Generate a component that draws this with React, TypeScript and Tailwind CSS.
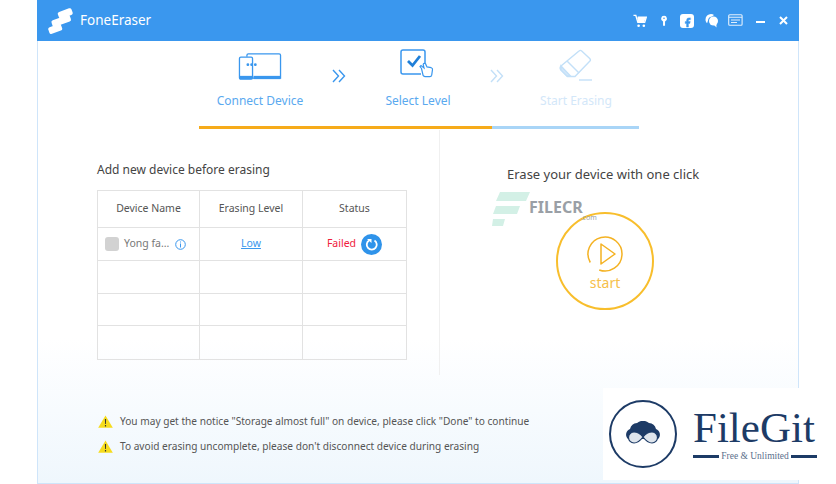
import { Facebook } from "lucide-react";

const font = "font-['Noto_Sans','Liberation_Sans',sans-serif]";

function LogoMark() {
  return (
    <svg width="26" height="26" viewBox="0 0 26 26" fill="#fff">
      <rect x="10" y="2" width="14.500" height="7" rx="2" transform="rotate(-20 17 5.500)" />
      <rect x="3.500" y="9.500" width="19.500" height="7" rx="2" transform="rotate(-20 13 13)" />
      <rect x="0.500" y="17.500" width="13.500" height="7" rx="2" transform="rotate(-20 7 21)" />
    </svg>
  );
}

function HeaderIcons() {
  return (
    <div className="flex items-center text-white">
      <svg width="14" height="14" viewBox="0 0 15 15" fill="#fff">
        <path d="M0.500 1.500h2.500l2.200 7.500h7.300l1.700-5.500H5" fill="none" stroke="#fff" strokeWidth="1.500" />
        <path d="M4.500 4h9l-1.600 4.800H5.600z" />
        <circle cx="6" cy="12.600" r="1.400" />
        <circle cx="11.600" cy="12.600" r="1.400" />
      </svg>
      <svg width="8" height="14" viewBox="0 0 10 15" fill="#fff" className="ml-[13px]">
        <path d="M5 1a3.600 3.600 0 0 1 1.300 7v5.500H3.800V8A3.600 3.600 0 0 1 5 1z" />
        <circle cx="5" cy="4" r="1" fill="#3a97ee" />
      </svg>
      <div className="ml-[12px] flex h-[14px] w-[14px] items-end justify-center rounded-[3px] bg-white">
        <Facebook size={11} fill="#3a97ee" stroke="#3a97ee" strokeWidth={1} />
      </div>
      <svg width="15" height="15" viewBox="0 0 15 15" fill="#fff" className="ml-[10px]">
        <path d="M7 1a5.500 5.500 0 0 0-5.500 5.500c0 1.600.6 2.800 1.600 3.800L4 7.500C4 5.500 5.500 3.500 8 3.400L10 2A6 6 0 0 0 7 1z" />
        <circle cx="9.500" cy="8" r="4.500" />
        <path d="M10 12l2.500 2.500-.2-4z" />
      </svg>
      <svg width="15" height="13" viewBox="0 0 15 13" fill="none" stroke="#fff" strokeWidth="1.100" opacity="0.85" className="ml-[9px]">
        <rect x="0.700" y="0.700" width="13.400" height="10.600" rx="1" />
        <path d="M0.700 3.300h13.400M3 6h9M3 8.500h6" />
      </svg>
      <div className="ml-[13px] mt-[3px] h-[2px] w-[9px] bg-white" />
      <svg width="9" height="9" viewBox="0 0 9 9" stroke="#fff" strokeWidth="2" className="ml-[14px]">
        <path d="M1 1l7 7M8 1l-7 7" />
      </svg>
    </div>
  );
}

function ConnectIcon() {
  return (
    <svg width="44" height="28" viewBox="0 0 46 30" fill="none" stroke="#3a97ee" strokeWidth="1.400" className="mb-[2px]">
      <path d="M9 4V2.500A1.500 1.500 0 0 1 10.500 1h33A1.500 1.500 0 0 1 45 2.500V27H15" />
      <rect x="1" y="4.500" width="14" height="23.500" rx="1.500" fill="#fff" />
      <rect x="1" y="24.500" width="13.500" height="3.500" fill="#3a97ee" stroke="none" />
      <rect x="16" y="24.500" width="29" height="3.500" fill="#3a97ee" stroke="none" />
      <circle cx="10" cy="12.500" r="0.800" fill="#3a97ee" />
      <circle cx="14" cy="12.500" r="0.800" fill="#3a97ee" />
      <circle cx="18" cy="12.500" r="0.800" fill="#3a97ee" />
    </svg>
  );
}

function LevelIcon() {
  return (
    <svg width="36" height="34" viewBox="0 0 36 34" fill="none" stroke="#3a97ee" strokeWidth="1.500">
      <path d="M21 25H3a2 2 0 0 1-2-2V3a2 2 0 0 1 2-2h20a2 2 0 0 1 2 2v12" />
      <path d="M8 12l4.500 4.500L20 7" strokeWidth="2.800" stroke="#1f7fd8" />
      <path
        d="M21.500 19.500l-1.500-2 1-1 3 2.500-.8-3.500a1.300 1.300 0 0 1 2.400-.6l1.400 3 4.200.8c1 .3 1.500 1 1.300 2l-.8 5.500c-.2 1-.8 1.500-1.800 1.500h-4.500c-1 0-1.700-.5-2.300-1.300z"
        fill="#fff"
        strokeWidth="1.200"
      />
    </svg>
  );
}

function EraseIcon() {
  return (
    <svg width="34" height="34" viewBox="0 0 34 34" fill="none" stroke="#c3e0f8" strokeWidth="1.400">
      <path d="M20 2a2 2 0 0 1 2.700 0l8 7.500a2 2 0 0 1 0 2.800L16 27.500H8.500L2 21a3 3 0 0 1 0-4z" />
      <path d="M8 12l12 12" />
      <path d="M2 17l9.500 10H8L2 21z" fill="#d3e8fa" />
      <path d="M20 31h13" />
    </svg>
  );
}

function Chevrons({ faded }: { faded?: boolean }) {
  const color = faded ? "#c3e0f8" : "#3a97ee";
  return (
    <svg width="14" height="14" viewBox="0 0 14 14" fill="none" stroke={color} strokeWidth="1.400">
      <path d="M1 1l5.500 6L1 13M7 1l5.500 6L7 13" />
    </svg>
  );
}

function WarnIcon() {
  return (
    <svg width="15" height="13" viewBox="0 0 15 13" className="shrink-0">
      <path d="M7.500 0.500L14.800 12.800H0.200z" fill="#f6dc1d" />
      <path d="M6.900 4h1.200l-.2 5H7.100zM6.900 10h1.200v1.400H6.900z" fill="#333" />
    </svg>
  );
}

const rows = [0, 1, 2];

function DeviceTable() {
  return (
    <div className="w-[310px] border border-[#e2e2e2] text-[10.500px] text-[#555]">
      <div className="grid h-[37px] grid-cols-[102px_103px_1fr] items-center border-b border-[#e2e2e2] text-center">
        <div className="flex h-full items-center justify-center border-r border-[#e2e2e2]">Device Name</div>
        <div className="flex h-full items-center justify-center border-r border-[#e2e2e2]">Erasing Level</div>
        <div>Status</div>
      </div>
      <div className="grid h-[33px] grid-cols-[102px_103px_1fr] items-center border-b border-[#e2e2e2]">
        <div className="flex h-full items-center border-r border-[#e2e2e2] pl-[7px]">
          <div className="h-[14px] w-[14px] rounded-[3px] bg-[#d2d2d2]" />
          <span className="ml-[5px] text-[#777]">Yong fa...</span>
          <svg width="11" height="11" viewBox="0 0 11 11" fill="none" stroke="#3a97ee" className="ml-[6px]">
            <circle cx="5.500" cy="5.500" r="4.800" />
            <path d="M5.500 4.500v4M5.500 2.500v1" />
          </svg>
        </div>
        <div className="flex h-full items-center justify-center border-r border-[#e2e2e2] text-[#3a97ee] underline">
          Low
        </div>
        <div className="flex items-center justify-center gap-[5px]">
          <span className="text-[#f0203c]">Failed</span>
          <svg width="21" height="21" viewBox="0 0 21 21">
            <circle cx="10.500" cy="10.500" r="10.500" fill="#2f93ea" />
            <path d="M8 6.500a5 5 0 1 0 5.500 0" fill="none" stroke="#fff" strokeWidth="1.800" />
            <path d="M6 5h4.500v4z" fill="#fff" />
          </svg>
        </div>
      </div>
      {rows.map((r) => (
        <div key={r} className="grid h-[32.500px] grid-cols-[102px_103px_1fr] border-b border-[#e2e2e2] last:border-b-0">
          <div className="border-r border-[#e2e2e2]" />
          <div className="border-r border-[#e2e2e2]" />
          <div />
        </div>
      ))}
    </div>
  );
}

function StartButton() {
  return (
    <div className="flex h-[98px] w-[98px] flex-col items-center rounded-full border-2 border-[#f8be2c] bg-white pt-[21px]">
      <svg width="38" height="38" viewBox="0 0 38 38" fill="none" stroke="#f4b223" strokeWidth="1.500">
        <path d="M4.280 27.500A17 17 0 1 1 13.190 34.970" />
        <path d="M15 9l14 10-14 10z" strokeLinejoin="round" />
      </svg>
      <span className="mt-[2px] text-[14px] leading-[16px] text-[#f6c04a]">start</span>
    </div>
  );
}

function FileGitBadge() {
  return (
    <div className="absolute left-[603px] top-[388px] flex h-[92px] w-[217px] items-center bg-white pl-[6px]">
      <div className="flex h-[68px] w-[68px] items-center justify-center rounded-full border-2 border-[#1d3b66]">
        <svg width="36" height="26" viewBox="0 0 36 26">
          <path
            d="M3 18a6 6 0 0 1 2-10 8 8 0 0 1 7-6 10 10 0 0 1 12 0 8 8 0 0 1 7 6 6 6 0 0 1 2 10z"
            fill="#1d3b66"
          />
          <path
            d="M18 16c-3-4-6-5-9-5a5.500 5.500 0 0 0 0 11c3 0 6-2 9-6 3 4 6 6 9 6a5.500 5.500 0 0 0 0-11c-3 0-6 1-9 5z"
            fill="#dfe5ec"
            stroke="#1d3b66"
            strokeWidth="1.200"
          />
        </svg>
      </div>
      <div className="ml-[16px] flex w-[124px] flex-col">
        <span className="font-['Liberation_Serif',serif] text-[43px] leading-[42px] whitespace-nowrap text-[#1d3b66]">FileGit</span>
        <div className="mt-[2px] flex items-center gap-[2px]">
          <div className="h-[3px] flex-1 bg-[#1d3b66]" />
          <span className="font-['Liberation_Serif',serif] text-[9.500px] leading-[10px] whitespace-nowrap text-[#5b6f8b]">
            Free &amp; Unlimited
          </span>
          <div className="h-[3px] flex-1 bg-[#1d3b66]" />
        </div>
      </div>
    </div>
  );
}

function Watermark() {
  return (
    <div className="absolute left-[492px] top-[192px] flex">
      <svg width="38" height="35" viewBox="0 0 38 35" fill="#d3f0e6">
        <path d="M8 0h30l-4 9H4zM4 14h24l-3 8H1zM1 27h12l-2 7H0z" />
      </svg>
      <div className="relative ml-[-1px] mt-[6px] text-[16px] font-bold leading-[18px] text-[#9a9fa6]">
        FILECR
        <span className="absolute right-[-14px] top-[15px] text-[7px] font-normal leading-[9px]">
          .com
        </span>
      </div>
    </div>
  );
}

export default function App() {
  return (
    <div className={`relative h-[484px] w-[836px] overflow-hidden bg-white pl-[37px] ${font}`}>
      <div className="flex h-[484px] w-[762px] flex-col border-x border-b border-[#cfe5fa] bg-gradient-to-b from-white from-70% to-[#eff7fd]">
        <header className="mx-[-1px] flex h-[41px] shrink-0 items-center justify-between bg-[#3a97ee] pl-[11px] pr-[11px]">
          <div className="flex items-center gap-[6px]">
            <LogoMark />
            <span className="text-[13.500px] text-white">FoneEraser</span>
          </div>
          <HeaderIcons />
        </header>

        <div className="relative flex h-[89px] shrink-0 flex-col items-center">
          <div className="mt-[8px] flex h-[60px] items-start">
            <div className="flex w-[100px] flex-col items-center">
              <div className="flex h-[34px] items-end"><ConnectIcon /></div>
              <span className="mt-[10px] text-[12px] leading-[16px] text-[#5aa9ef]">Connect Device</span>
            </div>
            <div className="mt-[20px] flex w-[58px] justify-center"><Chevrons /></div>
            <div className="flex w-[100px] flex-col items-center">
              <div className="flex h-[34px] items-end"><LevelIcon /></div>
              <span className="mt-[10px] text-[12px] leading-[16px] text-[#5aa9ef]">Select Level</span>
            </div>
            <div className="mt-[20px] flex w-[58px] justify-center"><Chevrons faded /></div>
            <div className="flex w-[100px] flex-col items-center">
              <div className="flex h-[34px] items-end"><EraseIcon /></div>
              <span className="mt-[10px] text-[12px] leading-[16px] text-[#d3e7f9]">Start Erasing</span>
            </div>
          </div>
          <div className="absolute left-[161px] top-[85px] flex h-[3px] w-[440px]">
            <div className="w-[293px] bg-[#f6ab1a]" />
            <div className="flex-1 bg-[#a9d5f7]" />
          </div>
        </div>

        <div className="flex h-[245px] shrink-0">
          <section className="w-[402px] border-r border-[#f0f0f0] pl-[59px] pt-[31px]">
            <h2 className="text-[12px] font-normal leading-[18px] text-[#444]">Add new device before erasing</h2>
            <div className="mt-[11px]"><DeviceTable /></div>
          </section>
          <section className="flex flex-1 flex-col pl-[67px] pt-[34px]">
            <h2 className="text-[13px] font-normal leading-[20px] text-[#444]">Erase your device with one click</h2>
            <div className="ml-[49px] mt-[28px]"><StartButton /></div>
          </section>
        </div>

        <div className="flex flex-col gap-[9px] pl-[60px] pt-[38px] text-[10.150px] leading-[16px] text-[#555]">
          <div className="flex items-center gap-[7px]">
            <WarnIcon />
            <span>You may get the notice "Storage almost full" on device, please click "Done" to continue</span>
          </div>
          <div className="flex items-center gap-[7px]">
            <WarnIcon />
            <span>To avoid erasing uncomplete, please don't disconnect device during erasing</span>
          </div>
        </div>
      </div>
      <Watermark />
      <FileGitBadge />
    </div>
  );
}
